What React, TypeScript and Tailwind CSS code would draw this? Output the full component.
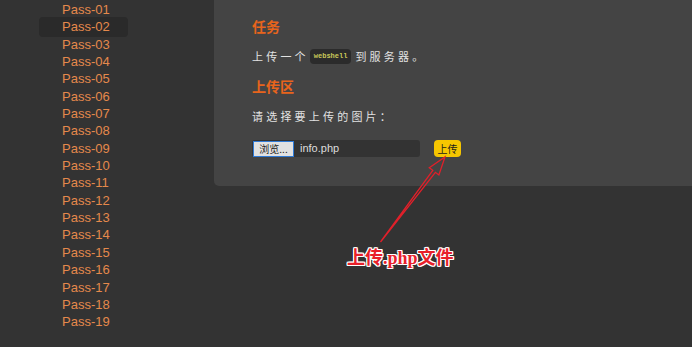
import React from "react";

const passes = Array.from({ length: 19 }, (_, i) => `Pass-${String(i + 1).padStart(2, "0")}`);

export default function App() {
  return (
    <div className="relative w-[692px] h-[347px] overflow-hidden bg-[#333333] flex items-start" style={{}}>
      <aside className="w-[214px] shrink-0 pt-[1px] pl-[39px]">
        <ul className="flex flex-col">
          {passes.map((p) => {
            const active = p === "Pass-02";
            return (
              <li
                key={p}
                className={
                  "w-[89px] pl-[23px] text-[13px] leading-[17.35px] text-[#e5894c] font-['Liberation_Sans',Arial,sans-serif] " +
                  (active ? "bg-[#2a2a2a] rounded-[4px] my-[-1.3px] py-[1.3px]" : "")
                }
              >
                {p}
              </li>
            );
          })}
        </ul>
      </aside>

      <main className="flex-1 h-[186px] bg-[#444444] rounded-bl-[5px] pl-[38px] pt-[16px] font-['Noto_Sans_CJK_SC','Liberation_Sans',sans-serif]">
        <h2 className="text-[14px] leading-[20px] font-bold text-[#e8641c]">任务</h2>
        <p className="mt-[10px] text-[11px] leading-[20px] text-[#e2e2e2] tracking-[3.2px] flex items-center">
          <span>上传一个</span>
          <code className="mx-[1px] mr-[4px] px-[4px] h-[15px] flex items-center rounded-[4px] bg-[#2b2b2b] text-[#c8c85a] text-[7px] tracking-[0px] font-bold font-['Liberation_Mono',monospace]">
            webshell
          </code>
          <span>到服务器。</span>
        </p>
        <h2 className="mt-[9.5px] text-[14px] leading-[20px] font-bold text-[#e8641c]">上传区</h2>
        <p className="mt-[10.5px] text-[11px] leading-[20px] text-[#e2e2e2] tracking-[3.2px]">请选择要上传的图片：</p>
        <div className="mt-[14px] flex items-center">
          <div className="flex items-center w-[168px] h-[17px] rounded-[3px] bg-[#333333]">
            <span className="ml-[1px] w-[41px] h-[16px] flex items-center justify-center bg-[#e1e1e1] border border-[#2f7ad6] text-[10px] text-[#222] leading-none">
              浏览...
            </span>
            <span className="ml-[6px] text-[11px] text-[#dddddd] font-['Liberation_Sans',Arial,sans-serif]">info.php</span>
          </div>
          <button className="ml-[14px] w-[27px] h-[17px] rounded-[4px] bg-[#f6c600] text-[10px] leading-none text-[#1a1a1a] flex items-center justify-center">
            上传
          </button>
        </div>
      </main>

      <svg className="absolute left-0 top-0 pointer-events-none" width="692" height="347" viewBox="0 0 692 347">
        <polygon
          points="380.5,242 432.8,170.3 429.3,167.7 445,157 438.9,174.9 435.4,172.3"
          fill="none"
          stroke="#e0202a"
          strokeWidth="1.3"
          strokeLinejoin="miter"
        />
      </svg>

      <div className="absolute left-[347px] top-[245px] text-[18px] leading-[22px] font-bold text-[#e8202a] font-['Noto_Sans_CJK_SC',sans-serif] [text-shadow:1px_0_0_#fff,-1px_0_0_#fff,0_1px_0_#fff,0_-1px_0_#fff,1px_1px_0_#fff,-1px_-1px_0_#fff,1px_-1px_0_#fff,-1px_1px_0_#fff]">
        上传<span className="font-['Liberation_Serif',serif]">.php</span>文件
      </div>
    </div>
  );
}
